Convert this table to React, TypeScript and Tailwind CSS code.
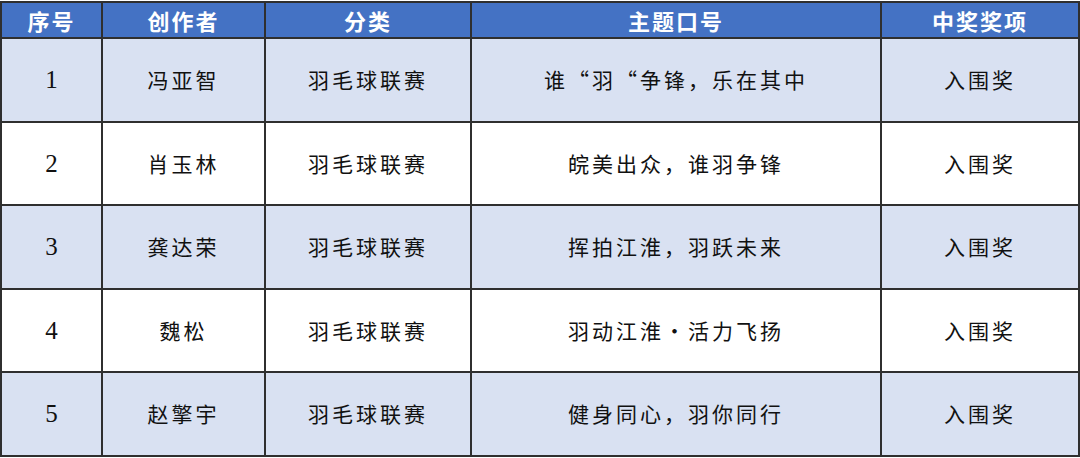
const rows = [
  { no: '1', author: '冯亚智', cat: '羽毛球联赛', slogan: '谁“羽“争锋，乐在其中', prize: '入围奖' },
  { no: '2', author: '肖玉林', cat: '羽毛球联赛', slogan: '皖美出众，谁羽争锋', prize: '入围奖' },
  { no: '3', author: '龚达荣', cat: '羽毛球联赛', slogan: '挥拍江淮，羽跃未来', prize: '入围奖' },
  { no: '4', author: '魏松', cat: '羽毛球联赛', slogan: '羽动江淮·活力飞扬', prize: '入围奖' },
  { no: '5', author: '赵擎宇', cat: '羽毛球联赛', slogan: '健身同心，羽你同行', prize: '入围奖' },
];

const headers = ['序号', '创作者', '分类', '主题口号', '中奖奖项'];
const widths = ['w-[101px]', 'w-[163px]', 'w-[206px]', 'w-[410px]', 'w-[198px]'];

export default function App() {
  return (
    <div className="h-[458px] w-[1080px] overflow-hidden bg-white">
      <table className="mt-px w-[1078px] table-fixed border-collapse">
        <thead>
          <tr className="h-[36px] bg-[#4472c4]">
            {headers.map((h, i) => (
              <th
                key={h}
                className={`${widths[i]} border-2 border-[#2f2f2f] p-0 text-center font-['Noto_Sans_CJK_SC',sans-serif] text-[22px] font-bold leading-none tracking-[2px] text-white`}
              >
                {h}
              </th>
            ))}
          </tr>
        </thead>
        <tbody>
          {rows.map((r, idx) => (
            <tr key={r.no} className={`h-[83.6px] ${idx % 2 === 0 ? 'bg-[#d9e1f2]' : 'bg-white'}`}>
              <td className="border-2 border-[#2f2f2f] p-0 text-center font-['Liberation_Serif',serif] text-[25px] text-[#111]">
                {r.no}
              </td>
              {[r.author, r.cat, r.slogan, r.prize].map((t, i) => (
                <td
                  key={i}
                  className="border-2 border-[#2f2f2f] p-0 text-center font-['Noto_Sans_CJK_SC',serif] text-[21px] font-normal tracking-[3px] text-[#111]"
                >
                  {t}
                </td>
              ))}
            </tr>
          ))}
        </tbody>
      </table>
    </div>
  );
}
